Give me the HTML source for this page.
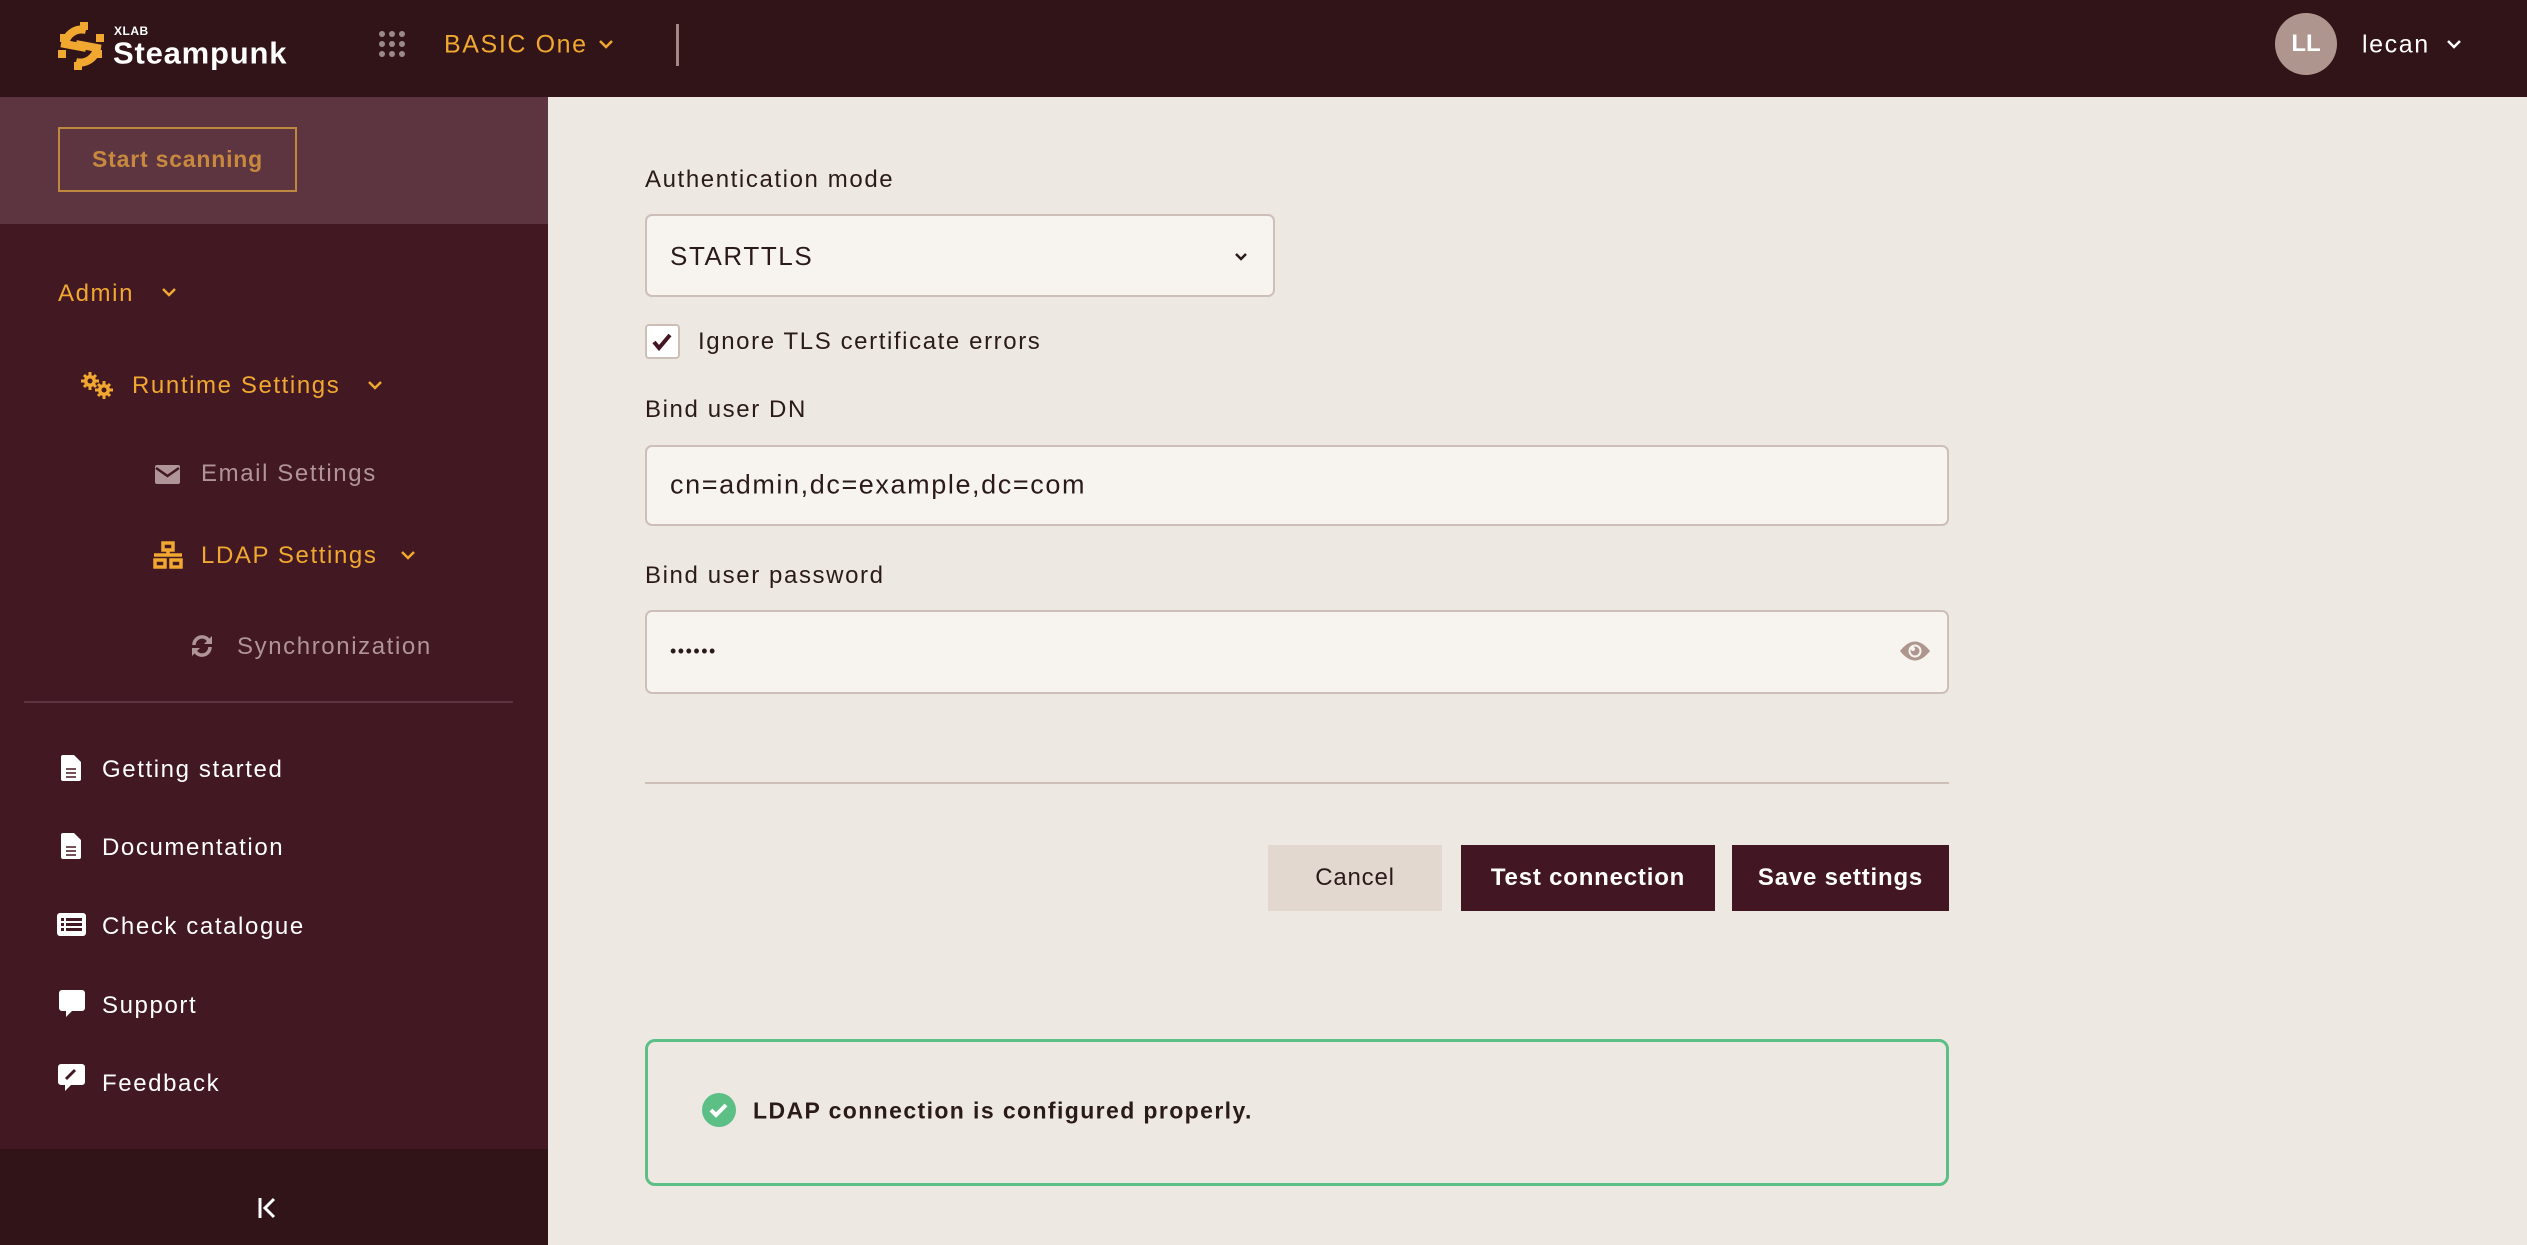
<!DOCTYPE html>
<html><head><meta charset="utf-8">
<style>
*{margin:0;padding:0;box-sizing:border-box}
html,body{width:2527px;height:1245px;overflow:hidden;background:#ede8e2;font-family:"Liberation Sans",sans-serif}
.abs{position:absolute}
.hdr{left:0;top:0;width:2527px;height:97px;background:#311418}
.side{left:0;top:97px;width:548px;height:1148px;background:#421822}
.start{left:0;top:97px;width:548px;height:127px;background:#5c3541}
.btnS{left:58px;top:127px;width:239px;height:65px;border:2px solid #c0883f;color:#c8893e;font-size:23px;font-weight:bold;letter-spacing:0.8px;display:flex;align-items:center;justify-content:center}
.t{position:absolute;white-space:nowrap;line-height:1;transform:translateY(-50%);letter-spacing:1.6px}
.or{color:#f0a830}
.gr{color:#b09598}
.wh{color:#fff}
.lbl{color:#2b1a1a;font-size:24px}
.inp{position:absolute;background:#f7f4ef;border:2px solid #cdbfb8;border-radius:7px}
.btn{position:absolute;top:845px;height:66px;display:flex;align-items:center;justify-content:center;font-size:24px;font-weight:bold;letter-spacing:0.8px}
</style></head><body>
<div class="abs hdr"></div>
<svg class="abs" style="left:56px;top:20px" width="50" height="52" viewBox="0 0 50 52">
<g fill="none" stroke="#f0a830" stroke-width="8">
<path d="M30 10 A17 17 0 0 0 9 24 L30 28"/>
<path d="M20 42 A17 17 0 0 0 41 28 L20 24"/>
</g>
<g fill="#f0a830"><rect x="24" y="2" width="8" height="8"/><rect x="4" y="14" width="8" height="8"/><rect x="2" y="30" width="8" height="8"/><rect x="18" y="42" width="8" height="8"/><rect x="38" y="30" width="8" height="8"/><rect x="40" y="14" width="8" height="8"/></g>
</svg>
<div class="t wh" style="left:114px;top:31px;font-size:12px;font-weight:bold;letter-spacing:0.5px">XLAB</div>
<div class="t wh" style="left:113px;top:53px;font-size:31px;font-weight:bold;letter-spacing:0.8px">Steampunk</div>
<svg class="abs" style="left:379px;top:31px" width="26" height="26" viewBox="0 0 26 26"><g fill="#9c8a88"><circle cx="3" cy="3" r="3"/><circle cx="13" cy="3" r="3"/><circle cx="23" cy="3" r="3"/><circle cx="3" cy="13" r="3"/><circle cx="13" cy="13" r="3"/><circle cx="23" cy="13" r="3"/><circle cx="3" cy="23" r="3"/><circle cx="13" cy="23" r="3"/><circle cx="23" cy="23" r="3"/></g></svg>
<div class="t or" style="left:444px;top:45px;font-size:25px">BASIC One</div>
<svg class="abs" style="left:598px;top:38px" width="16" height="12" viewBox="0 0 16 12"><path d="M2 3l6 6 6-6" fill="none" stroke="#f0a830" stroke-width="2.5"/></svg>
<div class="abs" style="left:676px;top:24px;width:3px;height:42px;background:#a08a85"></div>
<div class="abs" style="left:2275px;top:13px;width:62px;height:62px;border-radius:50%;background:#ae968f;color:#fff;font-size:24px;font-weight:bold;display:flex;align-items:center;justify-content:center">LL</div>
<div class="t wh" style="left:2362px;top:45px;font-size:25px">lecan</div>
<svg class="abs" style="left:2446px;top:38px" width="16" height="12" viewBox="0 0 16 12"><path d="M2 3l6 6 6-6" fill="none" stroke="#fff" stroke-width="2.5"/></svg>

<div class="abs side"></div>
<div class="abs start"></div>
<div class="abs btnS">Start scanning</div>
<div class="t or" style="left:58px;top:294px;font-size:24px">Admin</div>
<svg class="abs" style="left:161px;top:286px" width="16" height="12" viewBox="0 0 16 12"><path d="M2 3l6 6 6-6" fill="none" stroke="#f0a830" stroke-width="2.5"/></svg>
<svg class="abs" style="left:81px;top:372px" width="34" height="28" viewBox="0 0 34 28"><g stroke="#f0a830" stroke-width="3"><path d="M9 0v18M0 9h18M3 3l12 12M15 3L3 15"/><path d="M23 9v18M14 18h18M17 12l12 12M29 12l-12 12"/></g><g fill="#f0a830"><circle cx="9" cy="9" r="6"/><circle cx="23" cy="18" r="6"/></g><g fill="#421822"><circle cx="9" cy="9" r="2.5"/><circle cx="23" cy="18" r="2.5"/></g></svg>
<div class="t or" style="left:132px;top:386px;font-size:24px">Runtime Settings</div>
<svg class="abs" style="left:367px;top:379px" width="16" height="12" viewBox="0 0 16 12"><path d="M2 3l6 6 6-6" fill="none" stroke="#f0a830" stroke-width="2.5"/></svg>
<svg class="abs" style="left:155px;top:465px" width="25" height="19" viewBox="0 0 25 19"><rect width="25" height="19" rx="2" fill="#b09598"/><path d="M1 3l11.5 8L24 3" fill="none" stroke="#421822" stroke-width="2.5"/></svg>
<div class="t gr" style="left:201px;top:474px;font-size:24px">Email Settings</div>
<svg class="abs" style="left:153px;top:541px" width="30" height="29" viewBox="0 0 30 29"><g fill="none" stroke="#f0a830" stroke-width="3.5"><rect x="10" y="2" width="10" height="7"/><rect x="2" y="19" width="10" height="7"/><rect x="18" y="19" width="10" height="7"/><path d="M15 9v5M1 14h28"/></g></svg>
<div class="t or" style="left:201px;top:556px;font-size:24px">LDAP Settings</div>
<svg class="abs" style="left:400px;top:549px" width="16" height="12" viewBox="0 0 16 12"><path d="M2 3l6 6 6-6" fill="none" stroke="#f0a830" stroke-width="2.5"/></svg>
<svg class="abs" style="left:190px;top:634px" width="24" height="24" viewBox="0 0 24 24"><g fill="none" stroke="#b09598" stroke-width="3.5"><path d="M4 11A8 8 0 0 1 19 7"/><path d="M20 13A8 8 0 0 1 5 17"/></g><path d="M22 2v8h-8z M2 22v-8h8z" fill="#b09598"/></svg>
<div class="t gr" style="left:237px;top:647px;font-size:24px">Synchronization</div>
<div class="abs" style="left:24px;top:701px;width:489px;height:2px;background:#5c3541"></div>

<svg class="abs" style="left:61px;top:755px" width="20" height="26" viewBox="0 0 20 26"><path d="M2 0h11l7 7v17a2 2 0 0 1-2 2H2a2 2 0 0 1-2-2V2a2 2 0 0 1 2-2z" fill="#fff"/><path d="M5 14h10M5 18h10M5 22h10" stroke="#421822" stroke-width="1.5"/></svg>
<div class="t wh" style="left:102px;top:770px;font-size:24px">Getting started</div>
<svg class="abs" style="left:61px;top:833px" width="20" height="26" viewBox="0 0 20 26"><path d="M2 0h11l7 7v17a2 2 0 0 1-2 2H2a2 2 0 0 1-2-2V2a2 2 0 0 1 2-2z" fill="#fff"/><path d="M5 14h10M5 18h10M5 22h10" stroke="#421822" stroke-width="1.5"/></svg>
<div class="t wh" style="left:102px;top:848px;font-size:24px">Documentation</div>
<svg class="abs" style="left:57px;top:913px" width="29" height="23" viewBox="0 0 29 23"><rect width="29" height="23" rx="3" fill="#fff"/><g fill="#421822"><rect x="4" y="5" width="3" height="3"/><rect x="4" y="10" width="3" height="3"/><rect x="4" y="15" width="3" height="3"/><rect x="9" y="5" width="16" height="3"/><rect x="9" y="10" width="16" height="3"/><rect x="9" y="15" width="16" height="3"/></g></svg>
<div class="t wh" style="left:102px;top:927px;font-size:24px">Check catalogue</div>
<svg class="abs" style="left:59px;top:990px" width="26" height="27" viewBox="0 0 26 27"><path d="M3 0h20a3 3 0 0 1 3 3v15a3 3 0 0 1-3 3H13l-6 6v-6H3a3 3 0 0 1-3-3V3a3 3 0 0 1 3-3z" fill="#fff"/></svg>
<div class="t wh" style="left:102px;top:1006px;font-size:24px">Support</div>
<svg class="abs" style="left:58px;top:1064px" width="27" height="27" viewBox="0 0 27 27"><path d="M3 0h21a3 3 0 0 1 3 3v15a3 3 0 0 1-3 3H13l-6 6v-6H3a3 3 0 0 1-3-3V3a3 3 0 0 1 3-3z" fill="#fff"/><path d="M8 15l9-9" stroke="#421822" stroke-width="3"/></svg>
<div class="t wh" style="left:102px;top:1084px;font-size:24px">Feedback</div>
<div class="abs" style="left:0;top:1149px;width:548px;height:96px;background:#311418"></div>
<svg class="abs" style="left:258px;top:1197px" width="18" height="22" viewBox="0 0 18 22"><path d="M2 1v20" stroke="#fff" stroke-width="3"/><path d="M16 2L7 11l9 9" fill="none" stroke="#fff" stroke-width="3"/></svg>

<div class="t lbl" style="left:645px;top:180px">Authentication mode</div>
<div class="inp" style="left:645px;top:214px;width:630px;height:83px"></div>
<div class="t" style="left:670px;top:256px;font-size:26px;color:#2b1a1a">STARTTLS</div>
<svg class="abs" style="left:1234px;top:252px" width="14" height="10" viewBox="0 0 14 10"><path d="M2 2l5 5 5-5" fill="none" stroke="#2b1a1a" stroke-width="2.5"/></svg>
<div class="abs" style="left:645px;top:324px;width:35px;height:35px;background:#fff;border:2px solid #cdbfb8;border-radius:4px"></div>
<svg class="abs" style="left:651px;top:332px" width="22" height="20" viewBox="0 0 22 20"><path d="M3 10l5 6L19 3" fill="none" stroke="#421622" stroke-width="4"/></svg>
<div class="t lbl" style="left:698px;top:342px">Ignore TLS certificate errors</div>
<div class="t lbl" style="left:645px;top:410px">Bind user DN</div>
<div class="inp" style="left:645px;top:445px;width:1304px;height:81px"></div>
<div class="t" style="left:670px;top:485px;font-size:27px;color:#2b1a1a">cn=admin,dc=example,dc=com</div>
<div class="t lbl" style="left:645px;top:576px">Bind user password</div>
<div class="inp" style="left:645px;top:610px;width:1304px;height:84px"></div>
<div class="t" style="left:670px;top:651px;font-size:18px;color:#2b1a1a;letter-spacing:1.5px">••••••</div>
<svg class="abs" style="left:1899px;top:640px" width="32" height="22" viewBox="0 0 32 22"><path d="M1 11Q16 -8 31 11Q16 30 1 11z" fill="#ae968f"/><circle cx="16" cy="11" r="6.5" fill="#f7f4ef"/><circle cx="16" cy="11" r="4.5" fill="#ae968f"/><circle cx="14" cy="9" r="2" fill="#f7f4ef"/></svg>
<div class="abs" style="left:645px;top:782px;width:1304px;height:2px;background:#cdbfb8"></div>
<div class="btn" style="left:1268px;width:174px;background:#e2d8cf;color:#2b1a1a;font-weight:normal">Cancel</div>
<div class="btn" style="left:1461px;width:254px;background:#421622;color:#fff">Test connection</div>
<div class="btn" style="left:1732px;width:217px;background:#421622;color:#fff">Save settings</div>
<div class="abs" style="left:645px;top:1039px;width:1304px;height:147px;border:3px solid #5cbf86;border-radius:10px"></div>
<svg class="abs" style="left:701px;top:1092px" width="36" height="36" viewBox="0 0 36 36"><circle cx="18" cy="18" r="17" fill="#5cbf86"/><path d="M10 18l5 5 10-10" fill="none" stroke="#fff" stroke-width="4"/></svg>
<div class="t" style="left:753px;top:1111px;font-size:23px;font-weight:bold;color:#2b1a1a;letter-spacing:1.4px">LDAP connection is configured properly.</div>
</body></html>
